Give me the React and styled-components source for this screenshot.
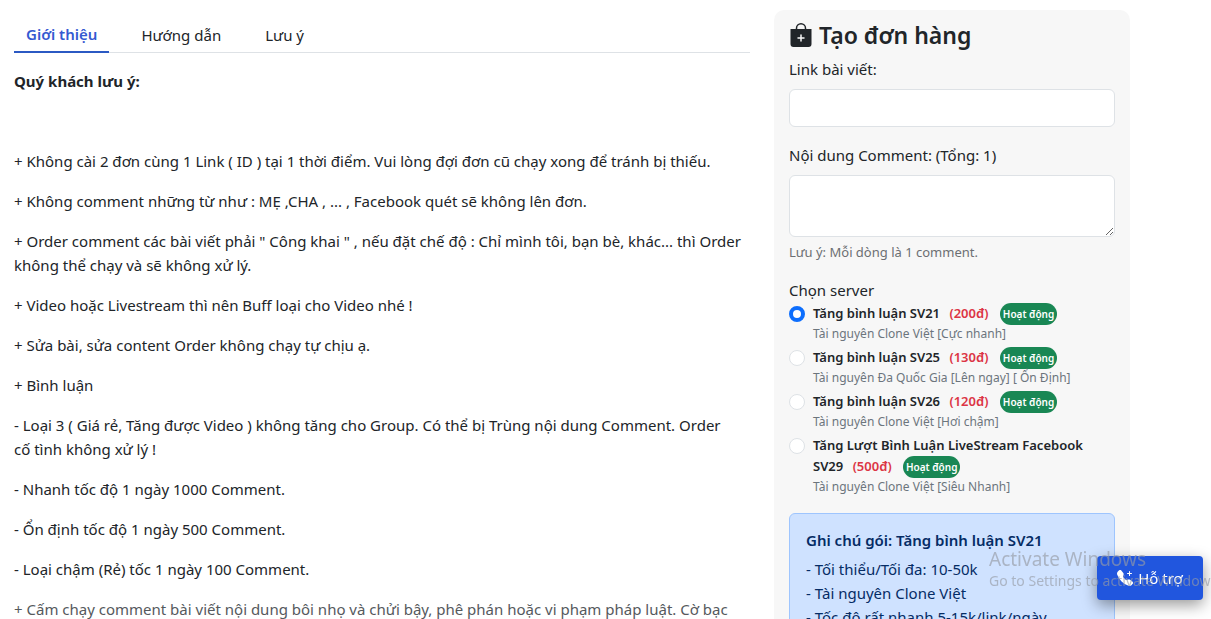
import React, { useState } from 'react'
import styled, { createGlobalStyle } from 'styled-components';
import { BsBagPlusFill, BsTelephonePlusFill } from 'react-icons/bs';

const tabs = ['Giới thiệu', 'Hướng dẫn', 'Lưu ý'];

const notes = [
    '+ Không cài 2 đơn cùng 1 Link ( ID ) tại 1 thời điểm. Vui lòng đợi đơn cũ chạy xong để tránh bị thiếu.',
    '+ Không comment những từ như : MẸ ,CHA , ... , Facebook quét sẽ không lên đơn.',
    '+ Order comment các bài viết phải " Công khai " , nếu đặt chế độ : Chỉ mình tôi, bạn bè, khác... thì Order không thể chạy và sẽ không xử lý.',
    '+ Video hoặc Livestream thì nên Buff loại cho Video nhé !',
    '+ Sửa bài, sửa content Order không chạy tự chịu ạ.',
    '+ Bình luận',
    '- Loại 3 ( Giá rẻ, Tăng được Video ) không tăng cho Group. Có thể bị Trùng nội dung Comment. Order cố\u00a0tình không xử lý !',
    '- Nhanh tốc độ 1 ngày 1000 Comment.',
    '- Ổn định tốc độ 1 ngày 500 Comment.',
    '- Loại chậm (Rẻ) tốc 1 ngày 100 Comment.',
];

const servers = [
    { id: 'sv21', name: 'Tăng bình luận SV21', price: '200đ', desc: 'Tài nguyên Clone Việt [Cực nhanh]' },
    { id: 'sv25', name: 'Tăng bình luận SV25', price: '130đ', desc: 'Tài nguyên Đa Quốc Gia [Lên ngay] [ Ổn Định]' },
    { id: 'sv26', name: 'Tăng bình luận SV26', price: '120đ', desc: 'Tài nguyên Clone Việt [Hơi chậm]' },
    { id: 'sv29', name: 'Tăng Lượt Bình Luận LiveStream Facebook SV29', price: '500đ', desc: 'Tài nguyên Clone Việt [Siêu Nhanh]' },
];

export default function App() {
    const [tab, setTab] = useState(0);
    const [server, setServer] = useState('sv21');

    return (
        <>
            <GlobalStyle />
            <Page>
                <Intro>
                    <TabList role="tablist">
                        {tabs.map((name, i) => (
                            <Tab key={name} type="button" role="tab" aria-selected={tab === i} $active={tab === i} onClick={() => setTab(i)}>
                                {name}
                            </Tab>
                        ))}
                    </TabList>
                    <NoteTitle>Quý khách lưu ý:</NoteTitle>
                    {notes.map(text => <Note key={text}>{text}</Note>)}
                    <Note $muted>
                        + Cấm chạy comment bài viết nội dung bôi nhọ và chửi bậy, phê phán hoặc vi phạm pháp luật. Cờ bạc
                    </Note>
                </Intro>

                <Side>
                    <Card>
                        <CardTitle><BsBagPlusFill size={24} /> Tạo đơn hàng</CardTitle>

                        <Label htmlFor="link">Link bài viết:</Label>
                        <Input id="link" type="text" />

                        <Label htmlFor="comment">Nội dung Comment: (Tổng: 1)</Label>
                        <TextArea id="comment" />
                        <Hint>Lưu ý: Mỗi dòng là 1 comment.</Hint>

                        <ServerList>
                            <Legend>Chọn server</Legend>
                            {servers.map(s => (
                                <Server key={s.id}>
                                    <Radio type="radio" name="server" id={s.id} checked={server === s.id} onChange={() => setServer(s.id)} />
                                    <ServerLabel htmlFor={s.id}>
                                        <ServerName>
                                            {s.name} <Price>({s.price})</Price> <Badge>Hoạt động</Badge>
                                        </ServerName>
                                        <ServerDesc>{s.desc}</ServerDesc>
                                    </ServerLabel>
                                </Server>
                            ))}
                        </ServerList>

                        <Alert>
                            <AlertTitle>Ghi chú gói: Tăng bình luận SV21</AlertTitle>
                            <div>- Tối thiểu/Tối đa: 10-50k</div>
                            <div>- Tài nguyên Clone Việt</div>
                            <div>- Tốc độ rất nhanh 5-15k/link/ngày</div>
                        </Alert>
                    </Card>
                </Side>
            </Page>

            <SupportButton type="button"><BsTelephonePlusFill size={16} /> Hỗ trợ</SupportButton>

            <Watermark>
                <WatermarkTitle>Activate Windows</WatermarkTitle>
                <WatermarkText>Go to Settings to activate Windows.</WatermarkText>
            </Watermark>
        </>
    )
}

const GlobalStyle = createGlobalStyle`
*{
    box-sizing:border-box;
}

html{
    scrollbar-width:none;
}

body{
    margin:0;
    background:#fff;
    color:#212529;
    font-family:"Segoe UI","Noto Sans","Open Sans",sans-serif;
    font-size:15px;
    line-height:24px;
}

button,input,textarea{
    font:inherit;
}
`

const Page = styled.main`
display:grid;
grid-template-columns:2fr 1fr;
align-items:start;
max-width:1142px;
padding:10px 0 0 2px;
`

const Intro = styled.section`
min-width:0;
padding:0 12px;
`

const Side = styled.aside`
min-width:0;
padding:0 12px;
`

const TabList = styled.div`
display:flex;
gap:20px;
height:43px;
border-bottom:1px solid #dee2e6;
`

const Tab = styled.button`
height:43px;
padding:${props => props.$active ? '6px 12px 0' : '8px 12px 0'};
border:0;
border-bottom:2px solid ${props => props.$active ? '#2b59c3' : 'transparent'};
background:transparent;
color:${props => props.$active ? '#3459d1' : '#212529'};
font-weight:${props => props.$active ? 600 : 400};
cursor:pointer;
`

const NoteTitle = styled.p`
margin:16px 0 56px;
font-weight:700;
`

const Note = styled.p`
margin:0 0 16px;
color:${props => props.$muted ? '#55595d' : '#212529'};
`

const Card = styled.form`
padding:9px 15px 16px;
border-radius:10px;
background:#f7f7f7;
`

const CardTitle = styled.h1`
display:flex;
align-items:center;
gap:6px;
margin:0 0 6px;
font-size:23px;
font-weight:600;
line-height:32px;
`

const Label = styled.label`
display:block;
margin-bottom:8px;
`

const Input = styled.input`
display:block;
width:100%;
height:38px;
margin-bottom:16px;
padding:6px 12px;
border:1px solid #dee2e6;
border-radius:6px;
background:#fff;
`

const TextArea = styled.textarea`
display:block;
width:100%;
height:62px;
padding:6px 12px;
border:1px solid #dee2e6;
border-radius:6px;
background:#fff;
resize:vertical;
`

const Hint = styled.div`
margin-top:3px;
color:#6c6f73;
font-size:13px;
`

const ServerList = styled.fieldset`
min-width:0;
margin:14px 0 0;
padding:0;
border:0;
`

const Legend = styled.legend`
margin-bottom:1px;
padding:0;
`

const Server = styled.div`
display:flex;
gap:8px;
margin-bottom:3px;
`

const Radio = styled.input`
appearance:none;
flex:none;
width:16px;
height:16px;
margin:3px 0 0;
border:1px solid #dee2e6;
border-radius:50%;
background:#fff;

&:checked{
    border:4px solid #0d6efd;
}
`

const ServerLabel = styled.label`
flex:1;
min-width:0;
padding-right:8px;
`

const ServerName = styled.span`
display:block;
font-size:13px;
font-weight:600;
line-height:21px;
`

const Price = styled.span`
margin:0 8px 0 6px;
color:#dc3545;
`

const Badge = styled.span`
display:inline-block;
margin:-3px 0;
padding:0 3px;
border-radius:11px;
background:#198754;
color:#fff;
font-size:10px;
line-height:22px;
vertical-align:middle;
`

const ServerDesc = styled.span`
display:block;
color:#6c757d;
font-size:12px;
line-height:20px;
`

const Alert = styled.div`
margin-top:13px;
padding:14px 16px;
border:1px solid #9ec5fe;
border-radius:6px;
background:#cfe2ff;
color:#052c65;
`

const AlertTitle = styled.h2`
margin:0 0 5px;
font-size:15px;
font-weight:600;
line-height:24px;
`

const SupportButton = styled.button`
position:fixed;
right:8px;
bottom:19px;
display:flex;
align-items:center;
justify-content:center;
gap:5px;
width:106px;
height:44px;
border:0;
border-radius:4px;
background:#2156de;
color:#fff;
box-shadow:0 5px 15px rgba(0,0,0,.4);
cursor:pointer;
`

const Watermark = styled.div`
position:fixed;
right:0;
bottom:28px;
width:222px;
overflow:hidden;
color:rgba(150,155,165,.65);
white-space:nowrap;
pointer-events:none;
`

const WatermarkTitle = styled.div`
font-size:19px;
line-height:24px;
`

const WatermarkText = styled.div`
font-size:14px;
line-height:20px;
`
